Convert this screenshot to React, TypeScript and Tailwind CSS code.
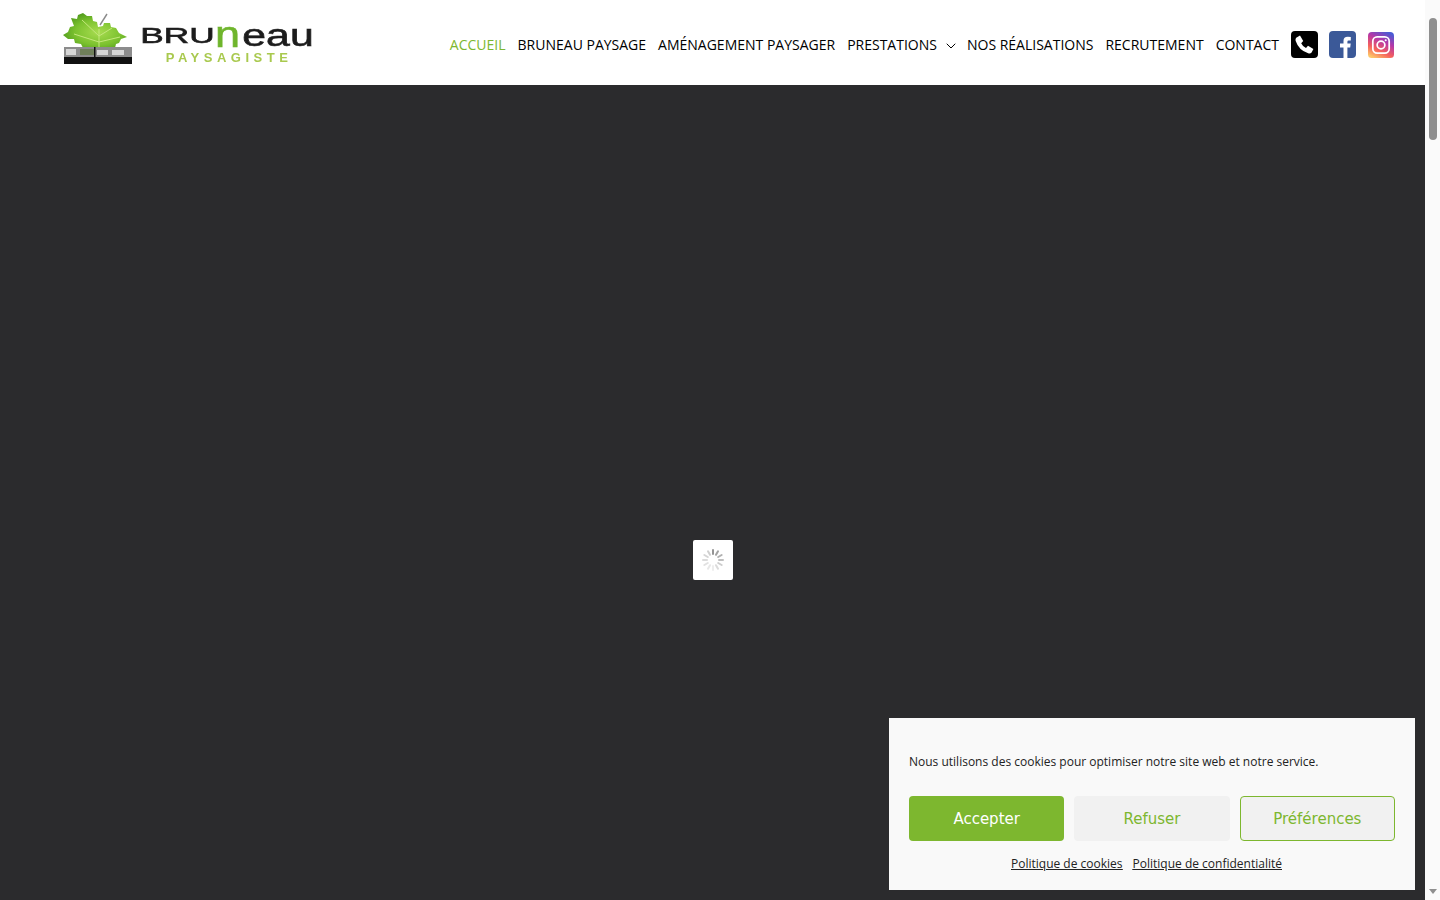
import { ChevronDown } from "lucide-react";

const navItems = ["BRUNEAU PAYSAGE", "AMÉNAGEMENT PAYSAGER"];
const navItemsEnd = ["NOS RÉALISATIONS", "RECRUTEMENT", "CONTACT"];

const Logo = () => (
  <div className="flex items-start w-[256px] h-[60px] mt-[10px]">
    <svg width="72" height="54" viewBox="0 0 72 54" className="mt-[2px] shrink-0 blur-[0.4px]">
      <defs>
        <radialGradient id="leaf" cx="0.55" cy="0.55" r="0.6">
          <stop offset="0" stopColor="#a8dc50" />
          <stop offset="0.6" stopColor="#7cc22f" />
          <stop offset="1" stopColor="#4f9a1c" />
        </radialGradient>
      </defs>
      <path d="M21 1 L25 4 L30 4 L31 9 L35 10 L36 15 L41 14 L42 11 L48 11 L49 15 L54 16 L57 21 L65 25 L59 27 L57 31 L54 32 L53 36 L21 36 L19 32 L13 31 L12 27 L6 27 L1 23 L6 20 L8 15 L12 14 L9 6 L15 7 L16 3 Z" fill="url(#leaf)" />
      <path d="M38 13 L45 2" stroke="#8a8a8a" strokeWidth="1.4" fill="none" />
      <path d="M37 17 L37 36 M37 24 L20 8 M37 24 L50 16 M37 30 L12 22 M37 30 L58 25" stroke="#c4e87c" strokeWidth="1" fill="none" />
      <rect x="2" y="35" width="68" height="10" fill="#8c8c8c" />
      <path d="M4 37 H14 V43 H4 Z M35 38 H46 V43 H35 Z M50 38 H62 V43 H50 Z" fill="#d6d6d6" />
      <rect x="18" y="37" width="14" height="6" fill="#6f7f5a" />
      <rect x="32" y="35" width="1.5" height="10" fill="#111" />
      <rect x="2" y="45" width="68" height="7" fill="#111" />
    </svg>
    <div className="ml-[6px] flex flex-col items-center w-[176px] font-['Liberation_Sans',sans-serif] blur-[0.3px]">
      <div className="flex items-end h-[24px] mt-[13px] w-[176px] text-[#1c1c1c] [-webkit-text-stroke:0.6px_#1c1c1c]">
        <div className="w-[75px] text-center text-[22px] leading-[22px] h-[22px] scale-x-[1.6]">BRU</div>
        <div className="w-[25px] text-center text-[36px] leading-[24px] h-[24px] text-[#6fb52c] [-webkit-text-stroke:0.6px_#6fb52c] scale-x-[1.25]">n</div>
        <div className="flex-1 text-center text-[31px] leading-[22px] h-[22px] scale-x-[1.38]">eau</div>
      </div>
      <div className="mt-[4px] pl-[2px] text-[13px] leading-[14px] font-bold tracking-[4.5px] text-[#a9c94e]">PAYSAGISTE</div>
    </div>
  </div>
);

const PhoneIcon = () => (
  <svg width="27" height="27" viewBox="0 0 27 27">
    <rect width="27" height="27" rx="4" fill="#000" />
    <path d="M5.2 6.8 L9 4.6 L12.2 10 L10.2 12.2 Q11.6 15.4 15 17 L17 14.8 L22.4 18 L20.6 21.4 Q19.4 22.8 17.2 22.2 Q7.8 19.5 4.6 9.8 Q4.2 7.8 5.2 6.8 Z" fill="#fff" />
  </svg>
);

const FacebookIcon = () => (
  <svg width="27" height="27" viewBox="0 0 27 27">
    <rect width="27" height="27" rx="4" fill="#3b5998" />
    <path d="M14.5 27 V16.5 H11 V12.5 H14.5 V9.8 Q14.5 5.8 18.8 5.8 L21.8 5.9 V9.4 H19.6 Q18.4 9.4 18.4 10.8 V12.5 H21.7 L21.2 16.5 H18.4 V27 Z" fill="#fff" />
  </svg>
);

const InstagramIcon = () => (
  <svg width="26" height="26" viewBox="0 0 27 27">
    <defs>
      <linearGradient id="ig" x1="0.25" y1="1" x2="0.75" y2="0">
        <stop offset="0" stopColor="#fdc468" />
        <stop offset="0.3" stopColor="#f5605c" />
        <stop offset="0.65" stopColor="#b537a8" />
        <stop offset="1" stopColor="#4a5bd4" />
      </linearGradient>
    </defs>
    <rect width="27" height="27" rx="4" fill="url(#ig)" />
    <rect x="5" y="5" width="17" height="17" rx="4.5" fill="none" stroke="#fff" strokeWidth="1.8" />
    <circle cx="13.5" cy="13.5" r="4" fill="none" stroke="#fff" strokeWidth="1.8" />
    <circle cx="18.4" cy="8.6" r="1.1" fill="#fff" />
  </svg>
);

const Spinner = () => (
  <svg width="24" height="24" viewBox="0 0 24 24">
    {Array.from({ length: 12 }).map((_, i) => (
      <rect
        key={i}
        x="11"
        y="1"
        width="2"
        height="6"
        rx="1"
        fill="#888"
        opacity={i < 6 ? 0.9 - i * 0.12 : 0.15 + (i - 6) * 0.05}
        transform={`rotate(${i * 30} 12 12)`}
      />
    ))}
  </svg>
);

const App = () => {
  return (
    <div className="relative flex h-screen overflow-hidden bg-white font-['Open_Sans','Noto_Sans',sans-serif]">
      <div className="flex-1 min-w-0 overflow-hidden">
        <header className="flex justify-between h-[85px] bg-white pl-[62px] pr-[31px]">
          <Logo />
          <nav className="flex items-center gap-3 h-[89px] text-[14px] text-black">
            <a className="text-[#7db72f]">ACCUEIL</a>
            {navItems.map((item) => (
              <a key={item}>{item}</a>
            ))}
            <a className="flex items-center">
              PRESTATIONS
              <ChevronDown strokeWidth={1.5} className="w-4 h-4 ml-[6px] mr-[-4px] mt-[2px]" />
            </a>
            {navItemsEnd.map((item) => (
              <a key={item}>{item}</a>
            ))}
            <PhoneIcon />
            <span className="ml-[-1px]"><FacebookIcon /></span>
            <InstagramIcon />
          </nav>
        </header>
        <main className="flex items-center justify-center h-[950px] bg-[#2b2b2d]">
          <div className="flex items-center justify-center w-10 h-10 rounded-[2px] bg-white">
            <Spinner />
          </div>
        </main>
      </div>

      <div className="flex flex-col items-center w-[15px] bg-[#fafafa]">
        <div className="h-[15px] w-full" />
        <div className="w-[8px] h-[122px] mt-[3px] rounded-full bg-[#8f8f8f]" />
        <div className="flex-1" />
        <div className="w-0 h-0 mb-[6px] border-x-[4px] border-x-transparent border-t-[5px] border-t-[#8f8f8f]" />
      </div>

      <div className="absolute right-[25px] bottom-[10px] w-[526px] h-[172px] bg-[#f9f9f9] px-5 pt-[34px]">
        <p className="text-[12px] leading-[20px] text-[#222]">
          Nous utilisons des cookies pour optimiser notre site web et notre service.
        </p>
        <div className="grid grid-cols-3 gap-[10px] mt-[24px] text-[15px] font-['DejaVu_Sans',sans-serif]">
          <button className="h-[45px] pt-[2px] rounded-[4px] bg-[#7db72f] text-white">Accepter</button>
          <button className="h-[45px] pt-[2px] rounded-[4px] bg-[#f1f1f1] text-[#7db72f]">Refuser</button>
          <button className="h-[45px] pt-[2px] rounded-[4px] border border-[#7db72f] bg-[#f1f1f1] text-[#7db72f]">Préférences</button>
        </div>
        <div className="flex justify-center gap-[10px] mt-[13px] pr-[11px] text-[12px] leading-[20px] text-[#222] underline">
          <a>Politique de cookies</a>
          <a>Politique de confidentialité</a>
        </div>
      </div>
    </div>
  );
};

export default App;
